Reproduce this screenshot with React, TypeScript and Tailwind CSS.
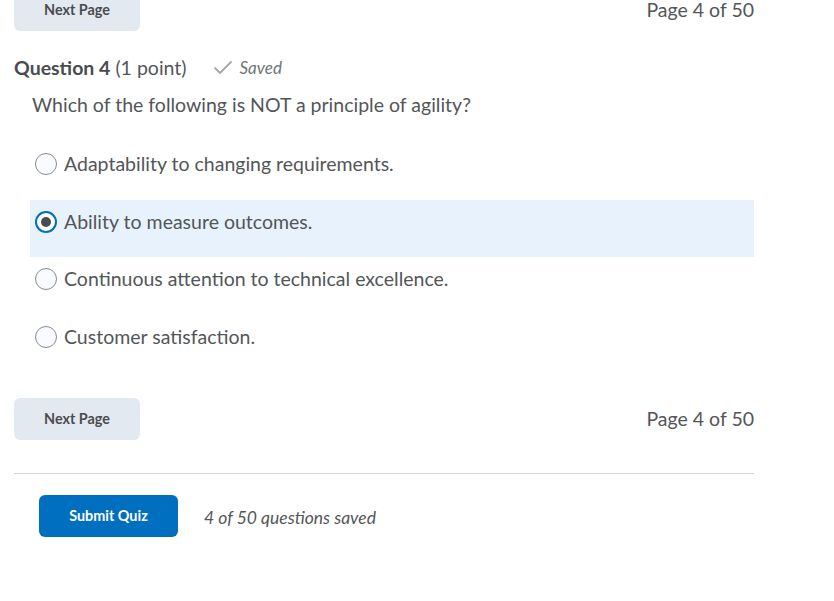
import { Check } from 'lucide-react';

const options = [
  'Adaptability to changing requirements.',
  'Ability to measure outcomes.',
  'Continuous attention to technical excellence.',
  'Customer satisfaction.',
];

const NextPage = () => (
  <button className="h-[42px] w-[126px] rounded-md bg-[#e3e9f1] text-[14.4px] font-bold text-[#494c4e]">
    Next Page
  </button>
);

export default function App() {
  const selected = 1;

  return (
    <div className="min-h-screen bg-white font-['Lato','Liberation_Sans',sans-serif] text-[#535659]">
      <div className="w-[740px] ml-[14px]">
        {/* Top pager */}
        <div className="-mt-[11px] flex items-center justify-between">
          <NextPage />
          <span className="text-[19.5px]">Page 4 of 50</span>
        </div>

        {/* Question header */}
        <div className="mt-[23px] flex h-[28px] items-center">
          <h2 className="text-[19.5px]">
            <span className="font-bold text-[#494c4e]">Question 4</span> (1 point)
          </h2>
          <span className="ml-[24px] flex items-center gap-[5px] text-[17px] italic text-[#6e7477]">
            <Check className="h-[24px] w-[24px] text-[#a3a9ad]" strokeWidth={1.8} />
            Saved
          </span>
        </div>

        <p className="mt-[9px] h-[28px] pl-[18px] text-[19.5px] leading-[28px]">
          Which of the following is NOT a principle of agility?
        </p>

        {/* Options */}
        <div className="mt-[23px] ml-[16px]">
          {options.map((opt, i) => (
            <div
              key={opt}
              className={`flex h-[57.5px] items-start pt-[9px] ${i === selected ? 'bg-[#e8f2fc]' : ''}`}
            >
              <span
                className={`ml-[5px] mt-[2px] flex h-[22px] w-[22px] shrink-0 items-center justify-center rounded-full ${
                  i === selected ? 'border-2 border-[#006fbf] bg-white' : 'border border-[#868c8f] bg-[#f9fbff]'
                }`}
              >
                {i === selected && <span className="h-[10px] w-[10px] rounded-full bg-[#494c4e]" />}
              </span>
              <span className="ml-[7px] text-[19.5px] leading-[26px]">{opt}</span>
            </div>
          ))}
        </div>

        {/* Bottom pager */}
        <div className="mt-[26px] flex items-center justify-between">
          <NextPage />
          <span className="text-[19.5px]">Page 4 of 50</span>
        </div>

        <div className="mt-[33px] h-px bg-[#cdd5dc]" />

        <div className="mt-[21px] flex items-center pl-[25px]">
          <button className="h-[42px] w-[139px] rounded-md bg-[#006fbf] text-[14.4px] font-bold text-white">
            Submit Quiz
          </button>
          <span className="ml-[26px] mt-[4px] text-[17.5px] italic">4 of 50 questions saved</span>
        </div>
      </div>
    </div>
  );
}
